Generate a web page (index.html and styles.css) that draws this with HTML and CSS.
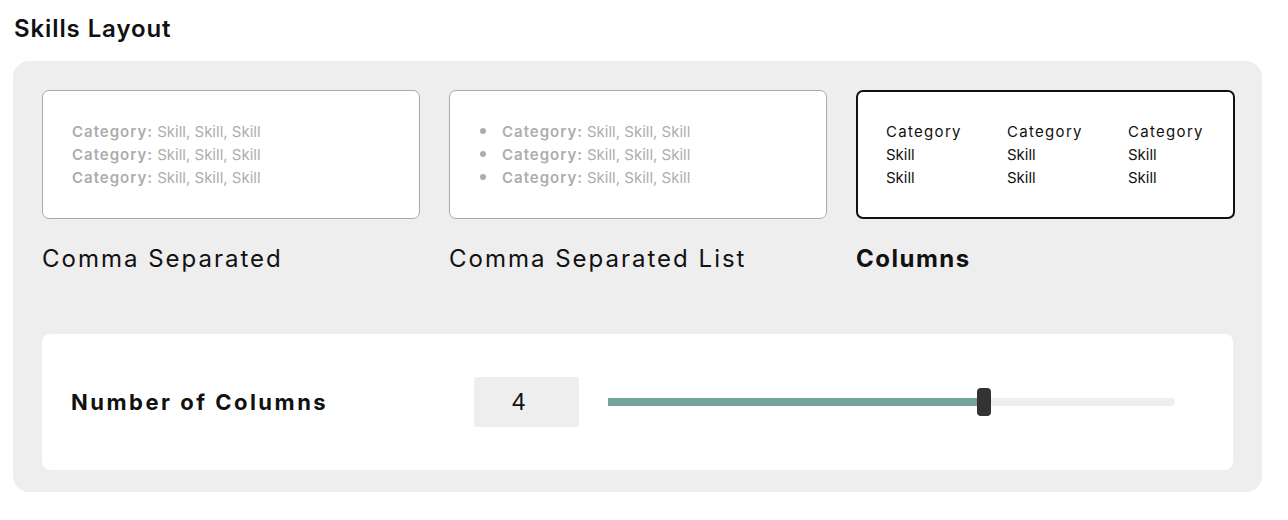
FILE: index.html
```html
<!DOCTYPE html>
<html lang="en">
<head>
    <meta charset="UTF-8">
    <title>Skills Layout</title>
    <link rel="stylesheet" href="styles.css">
</head>
<body>
    <h2 class="section-title">Skills Layout</h2>

    <div class="layout-panel">
        <div class="layout-options">
            <div class="layout-option">
                <div class="preview">
                    <div class="preview-lines">
                        <div><b>Category:</b> Skill, Skill, Skill</div>
                        <div><b>Category:</b> Skill, Skill, Skill</div>
                        <div><b>Category:</b> Skill, Skill, Skill</div>
                    </div>
                </div>
                <div class="option-label">Comma Separated</div>
            </div>

            <div class="layout-option">
                <div class="preview">
                    <ul class="preview-list">
                        <li><b>Category:</b> Skill, Skill, Skill</li>
                        <li><b>Category:</b> Skill, Skill, Skill</li>
                        <li><b>Category:</b> Skill, Skill, Skill</li>
                    </ul>
                </div>
                <div class="option-label">Comma Separated List</div>
            </div>

            <div class="layout-option selected">
                <div class="preview">
                    <div class="preview-columns">
                        <div><span class="col-head">Category</span><br>Skill<br>Skill</div>
                        <div><span class="col-head">Category</span><br>Skill<br>Skill</div>
                        <div><span class="col-head">Category</span><br>Skill<br>Skill</div>
                    </div>
                </div>
                <div class="option-label">Columns</div>
            </div>
        </div>

        <div class="settings-card">
            <div class="setting-label">Number of Columns</div>
            <div class="number-box">4</div>
            <div class="slider">
                <div class="slider-fill" style="width: 66.3%;"></div>
                <div class="slider-thumb" style="left: 66.3%;"></div>
            </div>
        </div>
    </div>
</body>
</html>
```

FILE: styles.css
```css
body {
    font-family: 'Inter', 'Noto Sans', sans-serif;
    margin: 0;
    padding: 0 26px 0 13px;
    background-color: #ffffff;
    color: #111;
}
.section-title {
    font-size: 24px;
    font-weight: 600;
    margin: 0;
    padding: 14px 0 0 1px;
    height: 61px;
    box-sizing: border-box;
    letter-spacing: 0.9px;
}
.layout-panel {
    background-color: #eeeeee;
    border-radius: 16px;
    padding: 29px 29px 22px 29px;
}
.layout-options {
    display: grid;
    grid-template-columns: 378px 378px 379px;
    gap: 29px;
    margin-bottom: 20px;
}
.preview {
    height: 129px;
    box-sizing: border-box;
    background-color: white;
    border: 1px solid #a9a9a9;
    border-radius: 7px;
    display: flex;
    align-items: center;
    padding: 0 29px;
    font-size: 15px;
    line-height: 23px;
    color: #adadad;
}
.preview-lines {
    margin-top: -1px;
}
.preview b {
    font-weight: 600;
    letter-spacing: 1px;
}
.preview-list {
    margin: -1px 0 0 0;
    padding: 0;
    list-style: none;
}
.preview-list li {
    display: flex;
    align-items: center;
}
.preview-list li::before {
    content: "";
    width: 6px;
    height: 6px;
    border-radius: 50%;
    background-color: #adadad;
    margin: 0 16px 0 1px;
}
.preview-list b {
    margin-right: 4px;
}
.selected .preview {
    border: 2px solid #111;
    color: #111;
    padding: 0 28px;
}
.preview-columns {
    display: grid;
    grid-template-columns: 121px 121px 121px;
    margin-top: -1px;
}
.col-head {
    letter-spacing: 1.3px;
}
.option-label {
    font-size: 24px;
    padding-top: 25px;
    height: 95px;
    box-sizing: border-box;
    color: #111;
    letter-spacing: 2px;
}
.selected .option-label {
    font-weight: 700;
    letter-spacing: 1.5px;
}
.settings-card {
    background-color: white;
    border-radius: 8px;
    height: 136px;
    display: flex;
    align-items: center;
    padding-left: 29px;
}
.setting-label {
    width: 403px;
    font-size: 22px;
    font-weight: 700;
    letter-spacing: 2.5px;
}
.number-box {
    width: 105px;
    height: 50px;
    box-sizing: border-box;
    background-color: #eeeeee;
    border-radius: 3px;
    font-family: 'Liberation Sans', Arial, sans-serif;
    font-size: 24px;
    display: flex;
    align-items: center;
    padding-left: 38px;
    margin-right: 29px;
}
.slider {
    position: relative;
    width: 567px;
    height: 8px;
    background-color: #eeeeee;
    border-radius: 4px;
}
.slider-fill {
    height: 100%;
    background-color: #72a39c;
}
.slider-thumb {
    position: absolute;
    top: -10px;
    width: 14px;
    height: 28px;
    margin-left: -7px;
    background-color: #333;
    border-radius: 4px;
}
```
